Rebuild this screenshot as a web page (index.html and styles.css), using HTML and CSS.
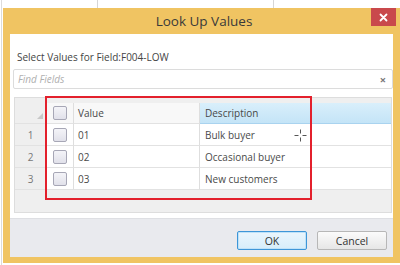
FILE: index.html
```html
<!DOCTYPE html>
<html>
<head>
<meta charset="utf-8">
<link rel="stylesheet" href="styles.css">
</head>
<body>
<div class="sheet"></div>
<div class="dialog">
  <div class="titlebar">
    <span class="title">Look Up Values</span>
    <div class="close">
      <svg width="9" height="9" viewBox="0 0 9 9"><path d="M1.5 1.5 L7.5 7.5 M7.5 1.5 L1.5 7.5" stroke="#fff" stroke-width="1.8" stroke-linecap="round"/></svg>
    </div>
  </div>
  <div class="content">
    <div class="label">Select Values for Field:F004-LOW</div>
    <div class="search">
      <span class="placeholder">Find Fields</span>
      <span class="clear">×</span>
    </div>
    <div class="grid">
      <div class="row head">
        <div class="cell num corner"><span class="tri"></span></div>
        <div class="cell chk"><span class="box"></span></div>
        <div class="cell val">Value</div>
        <div class="cell desc sel">Description</div>
      </div>
      <div class="row">
        <div class="cell num">1</div>
        <div class="cell chk"><span class="box"></span></div>
        <div class="cell val">01</div>
        <div class="cell desc">Bulk buyer
          <svg class="cursor" width="13" height="13" viewBox="0 0 13 13"><path d="M6.5 0.5 V4.5 M6.5 8.5 V12.5 M0.5 6.5 H4.5 M8.5 6.5 H12.5" stroke="#555" stroke-width="1"/></svg>
        </div>
      </div>
      <div class="row">
        <div class="cell num">2</div>
        <div class="cell chk"><span class="box"></span></div>
        <div class="cell val">02</div>
        <div class="cell desc">Occasional buyer</div>
      </div>
      <div class="row">
        <div class="cell num">3</div>
        <div class="cell chk"><span class="box"></span></div>
        <div class="cell val">03</div>
        <div class="cell desc">New customers</div>
      </div>
    </div>
    <div class="highlight"></div>
  </div>
  <div class="footer">
    <button class="btn ok">OK</button>
    <button class="btn">Cancel</button>
  </div>
</div>
</body>
</html>
```
FILE: styles.css
```css
* { box-sizing: border-box; }
html, body { margin: 0; padding: 0; }
body {
  width: 400px;
  height: 265px;
  overflow: hidden;
  background: #fff;
  position: relative;
  font-family: "Open Sans", "Noto Sans", sans-serif;
}
.sheet {
  position: absolute;
  inset: 0;
  background:
    linear-gradient(#d6d6d6, #d6d6d6) 97px 0 / 1px 8px no-repeat,
    linear-gradient(#d6d6d6, #d6d6d6) 273px 0 / 1px 8px no-repeat,
    linear-gradient(#dcdcdc, #dcdcdc) 1px 0 / 1px 265px no-repeat;
}
.dialog {
  position: relative;
  margin: 8px 0 0 3px;
  width: 397px;
  height: 255px;
  background: #f0c462;
  padding: 0 7px 6px 7px;
  display: flex;
  flex-direction: column;
}
.titlebar {
  height: 26px;
  display: flex;
  align-items: center;
  justify-content: center;
  padding-left: 5px;
}
.title {
  font-size: 13.5px;
  color: #3a3a3a;
}
.close {
  position: absolute;
  top: 0;
  right: 4px;
  width: 25px;
  height: 18px;
  background: #c9494c;
  display: flex;
  align-items: center;
  justify-content: center;
}
.content {
  position: relative;
  background: #fff;
  height: 184px;
  padding: 16px 0 0 0;
}
.label {
  font-size: 10px;
  color: #444;
  padding-left: 7px;
  line-height: 15px;
}
.search {
  margin: 4px 0 0 3px;
  height: 20px;
  border: 1px solid #dcdcdc;
  border-radius: 2px;
  display: flex;
  align-items: center;
  justify-content: space-between;
  padding: 0 6px 0 4px;
}
.placeholder {
  font-style: italic;
  font-size: 10px;
  color: #b0b0b0;
}
.clear {
  font-size: 11px;
  color: #777;
  font-weight: bold;
}
.grid {
  margin: 8px 1px 0 4px;
  height: 116px;
  background: #efefef;
  border: 1px solid #dddddd;
  padding-top: 5px;
}
.row {
  display: flex;
  height: 22px;
}
.row.head { height: 21px; }
.cell {
  border-right: 1px solid #dedede;
  border-bottom: 1px solid #e2e2e2;
  background: #fff;
  font-size: 10px;
  color: #4a4a4a;
  display: flex;
  align-items: center;
  position: relative;
}
.head .cell { background: #f8f8f8; color: #484848; }
.cell.num {
  width: 32px;
  background: #efefef;
  justify-content: center;
  color: #777;
  border-right: 1px solid #d8d8d8;
}
.head .cell.corner { background: #efefef; }
.tri {
  position: absolute;
  right: 3px;
  bottom: 4px;
  width: 0;
  height: 0;
  border-left: 6px solid transparent;
  border-bottom: 6px solid #c8c8c8;
}
.cell.chk { width: 27px; justify-content: center; }
.cell.val { width: 126px; padding-left: 4px; }
.cell.desc { flex: 1; padding-left: 5px; border-right: none; }
.head .cell.sel {
  background: linear-gradient(#d9effb, #c4e4f7);
  border-bottom: 1px solid #a9d3ef;
}
.box {
  width: 14px;
  height: 14px;
  border: 1px solid #a7a7b6;
  border-radius: 2px;
  background: linear-gradient(#f4f4f8, #e1e1ea);
}
.cursor {
  position: absolute;
  left: 94px;
  top: 5px;
}
.highlight {
  position: absolute;
  left: 35px;
  top: 62px;
  width: 267px;
  height: 104px;
  border: 2px solid #e3202c;
}
.footer {
  flex: 1;
  background: #e9eaee;
  border-top: 1px solid #dedfe3;
  display: flex;
  justify-content: flex-end;
  align-items: flex-start;
  gap: 10px;
  padding: 12px 6px 0 0;
}
.btn {
  width: 70px;
  height: 19px;
  font-family: "Open Sans", "Noto Sans", sans-serif;
  font-size: 10.5px;
  color: #333;
  border: 1px solid #b7b7b7;
  border-radius: 2px;
  background: linear-gradient(#fbfbfb, #e6e6e6);
  padding: 0;
}
.btn.ok {
  border-color: #3d96d8;
  background: linear-gradient(#eaf6fd, #d6edfa);
  box-shadow: inset 0 0 0 1px #bfe2f8;
}
```
